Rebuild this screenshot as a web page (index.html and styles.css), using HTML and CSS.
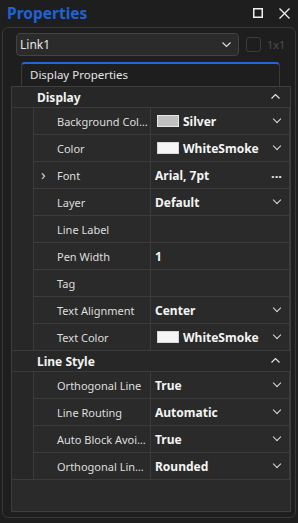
FILE: index.html
```
<!DOCTYPE html>
<html lang="en">
<head>
    <meta charset="UTF-8">
    <title>Properties</title>
    <link rel="stylesheet" href="styles.css">
</head>
<body>
    <div class="title-bar">
        <span class="title">Properties</span>
        <svg class="win-icon" width="10" height="10" viewBox="0 0 10 10"><rect x="0.75" y="0.75" width="8.5" height="8.5" fill="none" stroke="#f0f0f0" stroke-width="1.5"/></svg>
        <svg class="win-icon close" width="11" height="11" viewBox="0 0 11 11"><path d="M0.5 0.5 L10.5 10.5 M10.5 0.5 L0.5 10.5" stroke="#f0f0f0" stroke-width="1.3"/></svg>
    </div>

    <div class="panel">
        <div class="top-row">
            <div class="combo">
                <span>Link1</span>
                <svg width="9" height="5" viewBox="0 0 9 5"><path d="M0.5 0.5 L4.5 4.5 L8.5 0.5" fill="none" stroke="#e0e0e0" stroke-width="1.1"/></svg>
            </div>
            <div class="check"></div>
            <span class="check-label">1x1</span>
        </div>

        <div class="tabs">
            <div class="tab">Display Properties</div>
        </div>

        <div class="tab-body">
            <div class="section">
                <div class="cat-row">
                    <span>Display</span>
                    <svg class="up" width="9" height="5" viewBox="0 0 9 5"><path d="M0.5 4.5 L4.5 0.5 L8.5 4.5" fill="none" stroke="#e8e8e8" stroke-width="1.1"/></svg>
                </div>
                <div class="cat-body">
                    <div class="indent"></div>
                    <div class="rows">
                        <div class="row"><div class="name">Background Col…</div><div class="value"><i class="swatch silver"></i>Silver<b class="dd"></b></div></div>
                        <div class="row"><div class="name">Color</div><div class="value"><i class="swatch"></i>WhiteSmoke<b class="dd"></b></div></div>
                        <div class="row"><div class="name"><span class="expand">&#x203A;</span>Font</div><div class="value">Arial, 7pt<span class="dots">&middot;&middot;&middot;</span></div></div>
                        <div class="row"><div class="name">Layer</div><div class="value">Default<b class="dd"></b></div></div>
                        <div class="row"><div class="name">Line Label</div><div class="value"></div></div>
                        <div class="row"><div class="name">Pen Width</div><div class="value">1</div></div>
                        <div class="row"><div class="name">Tag</div><div class="value"></div></div>
                        <div class="row"><div class="name">Text Alignment</div><div class="value">Center<b class="dd"></b></div></div>
                        <div class="row"><div class="name">Text Color</div><div class="value"><i class="swatch"></i>WhiteSmoke<b class="dd"></b></div></div>
                    </div>
                </div>
            </div>
            <div class="section">
                <div class="cat-row">
                    <span>Line Style</span>
                    <svg class="up" width="9" height="5" viewBox="0 0 9 5"><path d="M0.5 4.5 L4.5 0.5 L8.5 4.5" fill="none" stroke="#e8e8e8" stroke-width="1.1"/></svg>
                </div>
                <div class="cat-body">
                    <div class="indent"></div>
                    <div class="rows">
                        <div class="row"><div class="name">Orthogonal Line</div><div class="value">True<b class="dd"></b></div></div>
                        <div class="row"><div class="name">Line Routing</div><div class="value">Automatic<b class="dd"></b></div></div>
                        <div class="row"><div class="name">Auto Block Avoi…</div><div class="value">True<b class="dd"></b></div></div>
                        <div class="row"><div class="name">Orthogonal Lin…</div><div class="value">Rounded<b class="dd"></b></div></div>
                    </div>
                </div>
            </div>
        </div>
    </div>
</body>
</html>
```

FILE: styles.css
```
body {
    margin: 0;
    background: #1e1e1e;
    font-family: "Noto Sans", "Open Sans", sans-serif;
    color: #e2e2e2;
    font-size: 11px;
}

.title-bar {
    height: 27px;
    display: flex;
    align-items: center;
    padding-left: 7px;
}

.title {
    color: #1f62d4;
    font-size: 15.5px;
    font-weight: bold;
    flex: 1;
    margin-top: -1px;
}

.win-icon {
    margin-right: 16px;
    margin-top: -1px;
}

.win-icon.close {
    margin-right: 8px;
}

.panel {
    margin: 0 2px;
    border: 1px solid #383838;
    border-radius: 6px;
    padding-top: 5px;
    box-sizing: border-box;
    height: 491px;
}

.top-row {
    display: flex;
    align-items: center;
    padding-left: 13px;
}

.combo {
    width: 223px;
    height: 23px;
    box-sizing: border-box;
    background: #2b2b2b;
    border: 1px solid #434343;
    border-radius: 4px;
    display: flex;
    align-items: center;
    justify-content: space-between;
    padding: 0 7px 0 3px;
    font-size: 12px;
    color: #e6e6e6;
}

.check {
    width: 15px;
    height: 15px;
    box-sizing: border-box;
    border: 1px solid #3c3c3c;
    border-radius: 3px;
    margin-left: 7px;
}

.check-label {
    margin-left: 6px;
    color: #4e4e4e;
    font-size: 11px;
}

.tabs {
    padding-left: 18px;
    margin-top: 6px;
}

.tab {
    width: 259px;
    height: 24px;
    box-sizing: border-box;
    border-top: 2px solid #2266da;
    border-left: 1px solid #3a3a3a;
    border-right: 1px solid #3a3a3a;
    border-radius: 4px 4px 0 0;
    padding-left: 8px;
    line-height: 21px;
    font-size: 11.5px;
    color: #e4e4e4;
}

.tab-body {
    margin-left: 8px;
    width: 280px;
    height: 426px;
    box-sizing: border-box;
    border: 1px solid #3e3e3e;
    background: #2a2a2a;
}

.section {
    border-bottom: 1px solid #3b3b3b;
}

.cat-row {
    height: 20px;
    border-bottom: 1px solid #3b3b3b;
    background: #272727;
    display: flex;
    align-items: center;
    justify-content: space-between;
    padding: 1px 10px 0 25px;
    box-sizing: border-box;
    height: 21px;
    font-weight: bold;
    font-size: 12px;
    color: #f2f2f2;
}

.cat-row .up {
    margin-top: -2px;
}

.cat-body {
    display: flex;
}

.indent {
    width: 21px;
    border-right: 1px solid #3b3b3b;
    background: #272727;
}

.rows {
    flex: 1;
}

.row {
    height: 26px;
    display: flex;
    border-bottom: 1px solid #3b3b3b;
    background: #2a2a2a;
}

.row:last-child {
    border-bottom: none;
}

.name {
    width: 117px;
    border-right: 1px solid #3b3b3b;
    padding-left: 23px;
    box-sizing: border-box;
    position: relative;
    line-height: 27px;
    white-space: nowrap;
    overflow: hidden;
    font-size: 11px;
    color: #dedede;
}

.expand {
    position: absolute;
    left: 7px;
    top: -1px;
    font-size: 15px;
    color: #d0d0d0;
}

.value {
    flex: 1;
    display: flex;
    align-items: center;
    padding: 1px 8px 0 4px;
    font-weight: bold;
    font-size: 12px;
    color: #f4f4f4;
    border-right: 1px solid #3b3b3b;
}

.swatch {
    width: 22px;
    height: 12px;
    box-sizing: border-box;
    background: #f5f5f5;
    border: 1px solid #d8d8d8;
    margin: -1px 4px 0 2px;
}

.swatch.silver {
    background: #c0c0c0;
    border-color: #e8e8e8;
}

.dd {
    margin-left: auto;
    width: 5px;
    height: 5px;
    border-right: 1px solid #dcdcdc;
    border-bottom: 1px solid #dcdcdc;
    transform: rotate(45deg);
    margin-top: -5px;
    margin-right: 1px;
}

.dots {
    margin-left: auto;
    font-size: 13px;
    color: #e6e6e6;
    margin-right: -1px;
}
```
